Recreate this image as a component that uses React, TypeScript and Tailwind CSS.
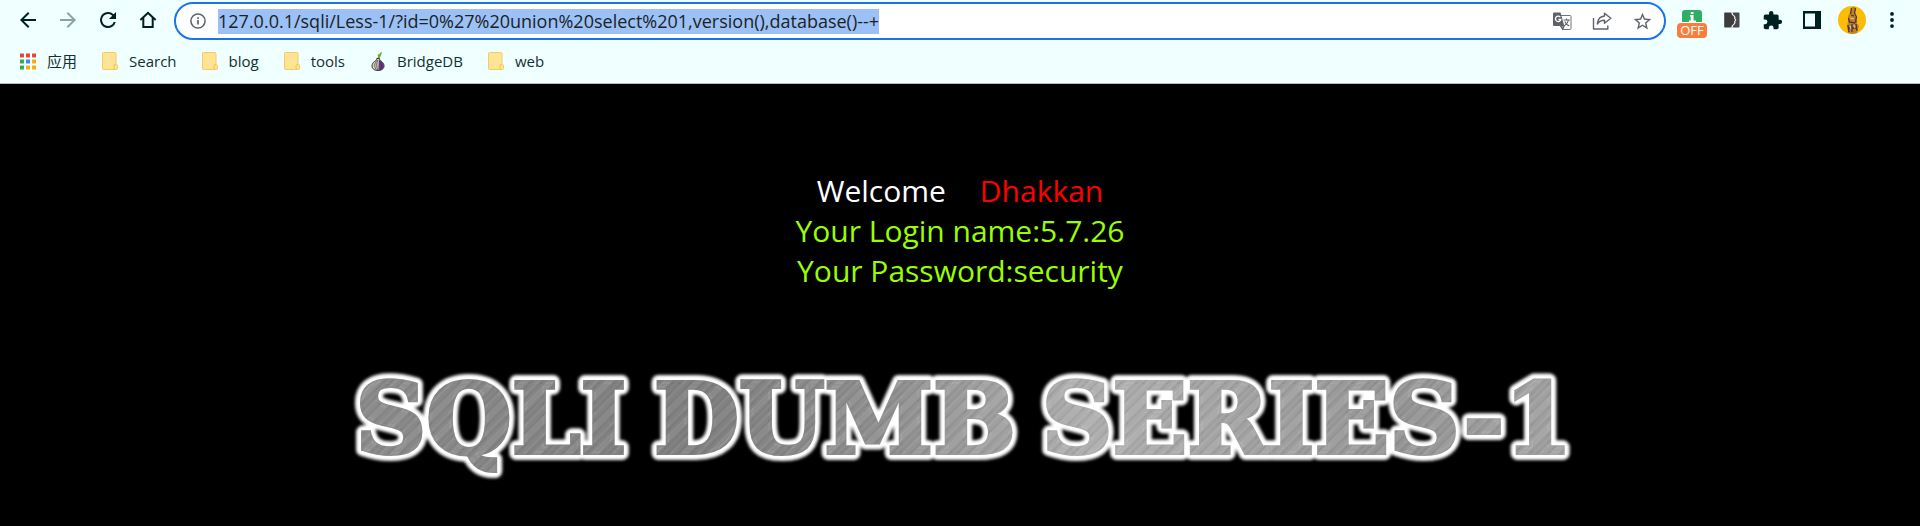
import type { ReactNode } from "react";

function NavButton({ label, children }: { label: string; children: ReactNode }) {
  return (
    <button type="button" aria-label={label} className="flex h-10 w-10 shrink-0 items-center justify-center">
      {children}
    </button>
  );
}

function Glyph({ d, color = "#00201f" }: { d: string; color?: string }) {
  return (
    <svg viewBox="0 0 24 24" className="h-6 w-6" fill={color} aria-hidden="true">
      <path d={d} />
    </svg>
  );
}

function AppsIcon() {
  const colors = ["#ea4335", "#ea4335", "#ea4335", "#34a853", "#4285f4", "#fbab05", "#34a853", "#fbab05", "#fbab05"];
  return (
    <svg viewBox="0 0 17 17" className="h-[17px] w-4" aria-hidden="true">
      {colors.map((c, i) => (
        <rect key={i} x={(i % 3) * 6.4} y={Math.floor(i / 3) * 6.4} width="4.2" height="4.2" fill={c} />
      ))}
    </svg>
  );
}

function FolderIcon() {
  return (
    <svg viewBox="0 0 16 18" className="h-[18px] w-4" aria-hidden="true">
      <path d="M1.5.5h11.3q1.2 0 1.2 1.2v10.6h.5q1 .3 1 1.5v2.3q0 1.4-1.4 1.4H1.5q-1 0-1-1v-15q0-1 1-1z" fill="#ffe495" stroke="#f2cc60" />
      <path d="M14 12.3q-2 .4-2 2v1.5q0 1.3 1 1.6" fill="none" stroke="#efc14a" />
    </svg>
  );
}

function OnionIcon() {
  return (
    <svg viewBox="0 0 16 20" className="h-5 w-4" aria-hidden="true">
      <path d="M7.3 8C8 4.5 9 2.5 12 .8L11.500 3 9.300 8z" fill="#68b030" />
      <path d="M8 3.500L9.500 5.500" stroke="#68b030" strokeWidth="1.500" />
      <path d="M6.800 7.500C7 10 2 10.500 2 15c0 2.700 2.400 4.500 6 4.500s6-1.800 6-4.500c0-4.500-5-5-4.500-7.500z" fill="#d8d5bf" stroke="#35323a" />
      <path d="M9 8c0 3-.5 4-.5 11.500 3.400 0 5.500-1.800 5.500-4.500C14 10.500 9.500 10 9 8z" fill="#68357f" />
      <path d="M7.500 9C4 12 4 16 6.500 19M7.900 9C6.300 12 6.300 16 7.800 19M10 10.500c2 3 2 5.500.5 8" fill="none" stroke="#37303c" strokeWidth=".7" />
    </svg>
  );
}

function Bookmark({ label, children }: { label: string; children: ReactNode }) {
  return (
    <a href="#" className="flex items-center gap-[11px] whitespace-nowrap">
      {children}
      <span>{label}</span>
    </a>
  );
}

function Toolbar() {
  return (
    <div className="flex h-10 items-center gap-1.5 px-2">
      <div className="flex shrink-0">
        <NavButton label="Back">
          <Glyph d="M20 11H7.830l5.590-5.590L12 4l-8 8 8 8 1.410-1.410L7.830 13H20v-2z" />
        </NavButton>
        <NavButton label="Forward">
          <Glyph color="#8ca3a2" d="M12 4l-1.410 1.410L16.170 11H4v2h12.170l-5.580 5.590L12 20l8-8z" />
        </NavButton>
        <NavButton label="Reload">
          <Glyph d="M17.650 6.350A7.960 7.960 0 0 0 12 4a8 8 0 1 0 7.730 10h-2.080A6 6 0 1 1 12 6c1.660 0 3.140.690 4.220 1.780L13 11h7V4l-2.350 2.350z" />
        </NavButton>
        <NavButton label="Home">
          <Glyph d="M12 3.500l-8.300 7.700 1.300 1.500 1.300-1.100V20h11.400v-8.400l1.300 1.100 1.300-1.500zM12 6.200l3.700 3.500V18H8.300V9.700z" />
        </NavButton>
      </div>

      <div className="mt-0.5 flex h-[38px] min-w-0 grow items-center rounded-full border-2 border-[#1a73e8] bg-white pl-3.5">
        <button type="button" aria-label="Site information" className="shrink-0">
          <svg viewBox="0 0 16 16" className="h-4 w-4" fill="none" stroke="#5f6368" strokeWidth="1.500" aria-hidden="true">
            <circle cx="8" cy="8" r="7.100" />
            <path d="M8 7v4.500M8 4.300v1.600" strokeWidth="1.700" />
          </svg>
        </button>
        <div className="ml-3 flex min-w-0 grow">
          <input
            aria-label="Address"
            defaultValue="127.0.0.1/sqli/Less-1/?id=0%27%20union%20select%201,version(),database()--+"
            className="field-sizing-content h-[25px] max-w-full bg-[#9bc1f6] text-[18px] leading-6 text-[#202124] outline-none"
          />
        </div>
        <NavButton label="Translate">
          <svg viewBox="0 0 20 20" className="h-5 w-5" aria-hidden="true">
            <path d="M8 4.500h10q1 0 1 1v12q0 1-1 1h-7.500z" fill="#fff" stroke="#70757a" />
            <path d="M2 1.500h6.500l3.800 13.500H2q-1 0-1-1V2.500q0-1 1-1z" fill="#5f6368" />
            <path d="M8.300 6.200A2.700 2.700 0 1 0 8.800 8.500H6.400" fill="none" stroke="#fff" strokeWidth="1.300" />
            <path d="M11.500 9h6.300M14.500 7.500V9M16.500 9c-.5 2.500-2 4.500-4 5.800M12.800 10.500c.8 2 2.300 3.500 4.500 4.500M8.500 15l2.200 3.300 1.500-3.300z" fill="none" stroke="#5f6368" strokeWidth="1.100" />
          </svg>
        </NavButton>
        <NavButton label="Share">
          <svg viewBox="0 0 20 20" className="h-5 w-5" fill="none" stroke="#5f6368" strokeWidth="1.400" strokeLinejoin="round" aria-hidden="true">
            <path d="M1.500 7v11h14.300v-3.500" />
            <path d="M12.500 2.200l6.300 5-6.300 5V9.300C9 9.300 7 10.500 5.300 13c.4-4.500 3-7.600 7.200-8z" />
          </svg>
        </NavButton>
        <NavButton label="Bookmark this page">
          <svg viewBox="0 0 24 24" className="h-[21px] w-[21px]" fill="#5f6368" aria-hidden="true">
            <path d="M22 9.240l-7.190-.620L12 2 9.190 8.630 2 9.240l5.460 4.730L5.820 21 12 17.270 18.180 21l-1.630-7.030L22 9.240zM12 15.400l-3.760 2.270 1-4.280-3.320-2.880 4.380-.380L12 6.100l1.710 4.040 4.380.380-3.320 2.880 1 4.280L12 15.400z" />
          </svg>
        </NavButton>
        <span className="w-0.5" />
      </div>

      <div className="flex shrink-0">
        <button type="button" aria-label="Proxy extension" className="flex h-10 w-10 flex-col items-center justify-center pt-2">
          <svg viewBox="0 0 20 12" className="h-3 w-5" aria-hidden="true">
            <path d="M3 0h14q3 0 3 3v9H0V3q0-3 3-3z" fill="#2eae67" />
            <path d="M8 5h3.500v5.500H14V12H7v-1.500h1.700V6.500H8zM8.700 2h2.800v2H8.700z" fill="#fff" />
          </svg>
          <span className="mt-px w-[30px] rounded-sm bg-[#ff7b3b] text-center text-[13px] leading-[15px] text-white">OFF</span>
        </button>
        <NavButton label="Page extension">
          <svg viewBox="0 0 16 16" className="h-4 w-4" aria-hidden="true">
            <path d="M1 .5h6.500q0 2.500 1.500 3l1.300 1.500v2l1.200 1-1.200 1v2L9 12.500q-1.500.5-1.500 3H1q-.8 0-.8-.8V1.300Q.2.500 1 .500z" fill="#3c3c3c" />
            <path d="M8.500.5h6q1 0 1 1v13q0 1-1 1h-6q0-2 1.300-2.500l1.400-1.500V9.300L12.500 8l-1.300-1.300V4.500L9.800 3Q8.500 2.500 8.500.500z" fill="#484848" />
            <path d="M8 .5q0 2.300 1.400 2.800l1.400 1.500v2L12 8l-1.200 1.200v2l-1.400 1.500Q8 13.200 8 15.500" fill="none" stroke="#e4eeee" strokeWidth=".9" />
          </svg>
        </NavButton>
        <NavButton label="Extensions">
          <svg viewBox="0 0 24 24" className="h-[21px] w-[21px]" fill="#00201f" aria-hidden="true">
            <path d="M20.500 11H19V7c0-1.100-.9-2-2-2h-4V3.500a2.500 2.500 0 0 0-5 0V5H4c-1.100 0-2 .9-2 2v3.800h1.500a2.700 2.700 0 0 1 0 5.400H2V20c0 1.100.9 2 2 2h3.800v-1.500a2.700 2.700 0 0 1 5.400 0V22H17c1.100 0 2-.9 2-2v-4h1.500a2.500 2.500 0 0 0 0-5z" />
          </svg>
        </NavButton>
        <NavButton label="Side panel">
          <svg viewBox="0 0 18 18" className="h-[18px] w-[18px]" aria-hidden="true">
            <path d="M0 0h18v18H0zM2 2.500v13h10v-13z" fill="#00201f" fillRule="evenodd" />
          </svg>
        </NavButton>
        <NavButton label="Profile">
          <svg viewBox="0 0 28 28" className="h-7 w-7" aria-hidden="true">
            <circle cx="14" cy="14" r="14" fill="#fbbc05" />
            <path d="M14 1l3 0 1 2-2 3 1 3 2 3 0 5 2 3-2 7-4 1-5-1-1-7 1-4 0-6 2-3z" fill="#bd8327" />
            <path d="M13.500 2l-1 6M17.500 2l-1 5 2 4-1 4M10.500 12l1 4 5 1 2-2M10 19l1 7M14 18v8M18 18l1 7M11 22h8M13 9l3 1" fill="none" stroke="#513044" strokeWidth="1.300" />
            <path d="M12 12l4 1M12 20l1 3M16 19l1 3" stroke="#e2c083" strokeWidth="1.200" />
          </svg>
        </NavButton>
        <NavButton label="Menu">
          <svg viewBox="0 0 4 16" className="h-4 w-1" fill="#00201f" aria-hidden="true">
            <circle cx="2" cy="1.900" r="1.900" />
            <circle cx="2" cy="8" r="1.900" />
            <circle cx="2" cy="14.100" r="1.900" />
          </svg>
        </NavButton>
      </div>
    </div>
  );
}

function Bookmarks() {
  return (
    <nav aria-label="Bookmarks" className="flex h-11 items-center gap-[25px] border-b border-[#b5c1c1] pb-px pl-5 text-[15px] text-[#12302f]">
      <Bookmark label="应用"><AppsIcon /></Bookmark>
      <Bookmark label="Search"><FolderIcon /></Bookmark>
      <Bookmark label="blog"><FolderIcon /></Bookmark>
      <Bookmark label="tools"><FolderIcon /></Bookmark>
      <Bookmark label="BridgeDB"><OnionIcon /></Bookmark>
      <Bookmark label="web"><FolderIcon /></Bookmark>
    </nav>
  );
}

const words = [
  { text: "SQLI", x: 161 },
  { text: "DUMB", x: 505 },
  { text: "SERIES-1", x: 977 },
];

function Words() {
  return words.map((w) => (
    <text key={w.text} x={w.x} y="98" textAnchor="middle">
      {w.text}
    </text>
  ));
}

function Banner() {
  return (
    <svg
      viewBox="0 0 1260 130"
      role="img"
      aria-label="SQLI DUMB SERIES-1"
      className="w-[1260px] max-w-full font-['DejaVu_Serif',serif] text-[98px] font-bold"
    >
      <defs>
        <linearGradient id="metal" gradientUnits="userSpaceOnUse" x1="0" y1="0" x2="1260" y2="0">
          <stop offset="0" stopColor="#8c8c8c" />
          <stop offset=".15" stopColor="#858585" />
          <stop offset=".3" stopColor="#808080" />
          <stop offset=".45" stopColor="#919191" />
          <stop offset=".6" stopColor="#aeaeae" />
          <stop offset=".75" stopColor="#a0a0a0" />
          <stop offset=".85" stopColor="#949494" />
          <stop offset="1" stopColor="#a4a4a4" />
        </linearGradient>
        <pattern id="brushed" width="41" height="400" patternUnits="userSpaceOnUse" patternTransform="rotate(45)">
          <path d="M2 0v400M9 0v400M13 0v400M24 0v400M35 0v400" stroke="#fff" strokeOpacity=".1" />
          <path d="M5 0v400M16 0v400M21 0v400M29 0v400M38 0v400" stroke="#000" strokeOpacity=".08" />
          <path d="M11 0v400M32 0v400" stroke="#fff" strokeOpacity=".05" strokeWidth="4" />
        </pattern>
        <filter id="glow" x="-5%" y="-30%" width="110%" height="160%">
          <feGaussianBlur stdDeviation="1.8" />
        </filter>
      </defs>
      <g fill="#fff" stroke="#fff" strokeWidth="14" strokeLinejoin="round" filter="url(#glow)" aria-hidden="true">
        <Words />
      </g>
      <g fill="url(#metal)" stroke="url(#metal)" strokeWidth="4">
        <Words />
      </g>
      <g fill="url(#brushed)" stroke="url(#brushed)" strokeWidth="4" aria-hidden="true">
        <Words />
      </g>
    </svg>
  );
}

export default function App() {
  return (
    <div className="min-h-screen bg-black font-['Open_Sans','Noto_Sans_CJK_SC',sans-serif]">
      <header className="bg-[#f0ffff]">
        <Toolbar />
        <Bookmarks />
      </header>
      <main className="flex flex-col items-center pt-[87px]">
        <div className="text-center text-[30px] leading-10 text-[#99ff00]">
          <p className="flex justify-center gap-[34px]">
            <span className="text-white">Welcome</span>
            <span className="text-[#ff0000]">Dhakkan</span>
          </p>
          <p>Your Login name:5.7.26</p>
          <p>Your Password:security</p>
        </div>
        <div className="mt-16 flex w-full justify-center">
          <Banner />
        </div>
      </main>
    </div>
  );
}
